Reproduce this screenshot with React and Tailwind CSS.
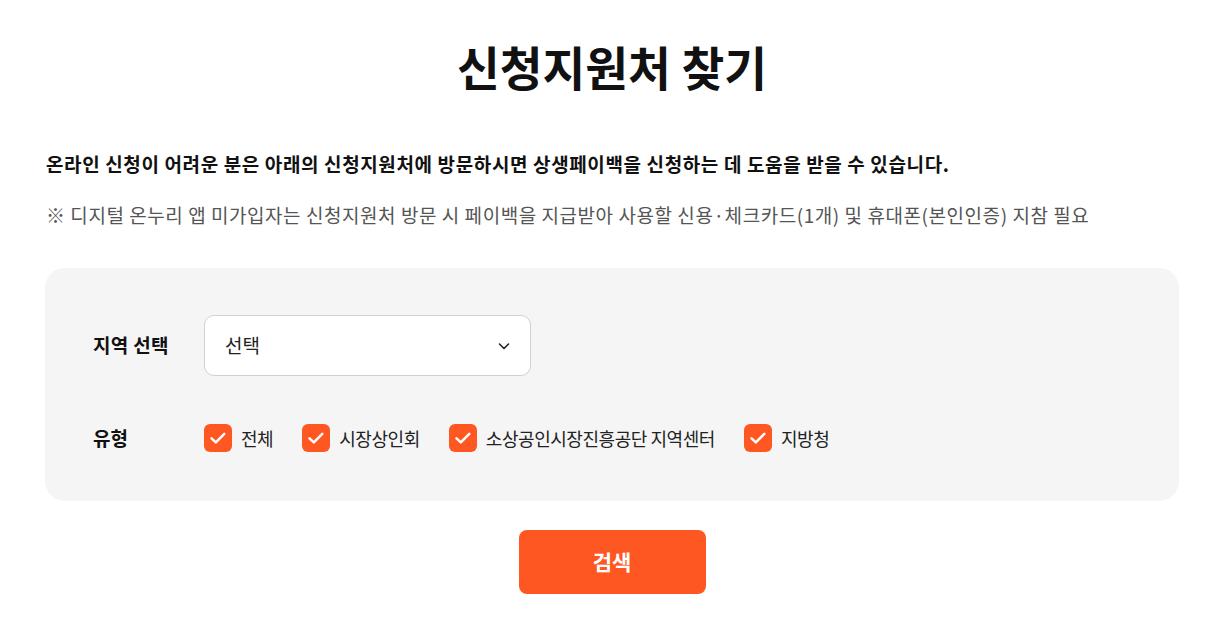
import React from 'react';

const Check = () => (
  <span className="flex h-[28px] w-[28px] items-center justify-center rounded-[6px] bg-[#ff5722]">
    <svg width="28" height="28" viewBox="0 0 28 28" fill="none">
      <path d="M7.5 14.3l4.3 4.1 8.5-8.6" stroke="white" strokeWidth="2.5" strokeLinecap="round" strokeLinejoin="round" />
    </svg>
  </span>
);

const types = ['전체', '시장상인회', '소상공인시장진흥공단 지역센터', '지방청'];

const App = () => {
  return (
    <div className="min-h-screen bg-white pl-[45px] pr-[41px] text-[#111] font-['Noto_Sans_CJK_KR','Noto_Sans',sans-serif]">
      <h1 className="pt-[30px] text-center text-[46.5px] font-bold leading-[72px]">신청지원처 찾기</h1>

      <p className="mt-[49px] pl-[1px] text-[19px] font-bold leading-[26px] tracking-[0.62px]">
        온라인 신청이 어려운 분은 아래의 신청지원처에 방문하시면 상생페이백을 신청하는 데 도움을 받을 수 있습니다.
      </p>
      <p className="mt-[25px] pl-[1px] text-[19px] leading-[26px] tracking-[0.55px] text-[#555]">
        ※ 디지털 온누리 앱 미가입자는 신청지원처 방문 시 페이백을 지급받아 사용할 신용·체크카드(1개) 및 휴대폰(본인인증) 지참 필요
      </p>

      <div className="mt-[40px] rounded-[20px] bg-[#f5f5f5] px-[48px] pt-[47px] pb-[48px]">
        <div className="flex items-center">
          <span className="w-[111px] text-[19px] font-bold tracking-[0.3px]">지역 선택</span>
          <div className="flex h-[61px] w-[327px] items-center justify-between rounded-[10px] border border-[#d0d0d5] bg-white pl-[20px] pr-[18px]">
            <span className="text-[19px] text-[#222]">선택</span>
            <svg width="16" height="16" viewBox="0 0 16 16" fill="none">
              <path d="M3.5 6l4.5 4.5L12.5 6" stroke="#222" strokeWidth="1.6" strokeLinecap="round" strokeLinejoin="round" />
            </svg>
          </div>
        </div>
        <div className="mt-[48px] flex items-center">
          <span className="w-[111px] text-[19px] font-bold">유형</span>
          <div className="flex items-center gap-[29px]">
            {types.map((t) => (
              <label key={t} className="flex items-center gap-[9px]">
                <Check />
                <span className="text-[18px] text-[#222] tracking-[-0.45px]">{t}</span>
              </label>
            ))}
          </div>
        </div>
      </div>

      <div className="mt-[29px] flex justify-center">
        <button className="h-[64px] w-[187px] rounded-[8px] bg-[#ff5722] text-[21px] font-bold text-white">검색</button>
      </div>
    </div>
  );
};

export default App;
